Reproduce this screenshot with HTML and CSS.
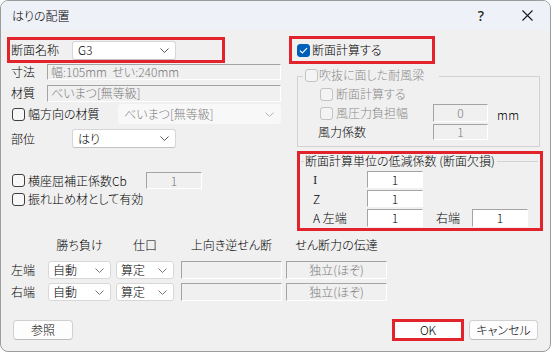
FILE: index.html
```html
<!DOCTYPE html>
<html lang="ja">
<head>
<meta charset="utf-8">
<title>はりの配置</title>
<link rel="stylesheet" href="styles.css">
</head>
<body>
<div class="window">
  <div class="titlebar">
    <span class="title">はりの配置</span>
    <span class="tbtn help">?</span>
    <span class="tbtn close"><svg width="11" height="11" viewBox="0 0 11 11"><path d="M0.5 0.5L10.5 10.5M10.5 0.5L0.5 10.5" stroke="#1a1a1a" stroke-width="1.1" fill="none"/></svg></span>
  </div>

  <div class="main">
    <div class="left">
      <div class="red rb-name">
        <span class="lbl lbl-name">断面名称</span>
        <div class="combo combo-short">G3<svg class="chev" width="9" height="5" viewBox="0 0 9 5"><path d="M0.5 0.5L4.5 4.5L8.5 0.5" fill="none" stroke="#555"/></svg></div>
      </div>
      <div class="row row-size">
        <span class="lbl lbl-short">寸法</span>
        <div class="fld dis fld-long">幅:105mm&nbsp;&nbsp;せい:240mm</div>
      </div>
      <div class="row row-mat">
        <span class="lbl lbl-short">材質</span>
        <div class="fld dis fld-long">べいまつ[無等級]</div>
      </div>
      <div class="row row-wmat">
        <span class="cb cb-left"></span>
        <span class="cblbl lbl-wmat">幅方向の材質</span>
        <div class="combo dis combo-wmat">べいまつ[無等級]<svg class="chev" width="9" height="5" viewBox="0 0 9 5"><path d="M0.5 0.5L4.5 4.5L8.5 0.5" fill="none" stroke="#b5b5b5"/></svg></div>
      </div>
      <div class="row row-part">
        <span class="lbl lbl-part">部位</span>
        <div class="combo combo-short">はり<svg class="chev" width="9" height="5" viewBox="0 0 9 5"><path d="M0.5 0.5L4.5 4.5L8.5 0.5" fill="none" stroke="#555"/></svg></div>
      </div>
      <div class="row row-cb">
        <span class="cb cb-left"></span>
        <span class="cblbl lbl-cbcoef">横座屈補正係数Cb</span>
        <div class="fld dis fld-cb">1</div>
      </div>
      <div class="row row-brace">
        <span class="cb cb-left"></span>
        <span class="cblbl">振れ止め材として有効</span>
      </div>
    </div>

    <div class="right">
      <div class="red rb-calc">
        <span class="cb on"><svg width="9" height="7" viewBox="0 0 9 7"><path d="M1 3.6L3.4 6L8 1.2" fill="none" stroke="#fff" stroke-width="1.2"/></svg></span>
        <span class="cblbl">断面計算する</span>
      </div>

      <div class="group wind">
        <div class="legend">
          <span class="cb dis"></span>
          <span class="cblbl gray">吹抜に面した耐風梁</span>
        </div>
        <div class="grow grow-calc">
          <span class="cb dis"></span>
          <span class="cblbl gray">断面計算する</span>
        </div>
        <div class="grow grow-width">
          <span class="cb dis"></span>
          <span class="cblbl gray lbl-wind">風圧力負担幅</span>
          <div class="fld dis fld-wind">0</div>
          <span class="unit">mm</span>
        </div>
        <div class="grow grow-coef">
          <span class="lbl lbl-coef">風力係数</span>
          <div class="fld dis fld-wind">1</div>
        </div>
      </div>

      <div class="red rb-reduce">
        <div class="gtitle">
          <span class="gline gline-start"></span>
          <span class="gtext">断面計算単位の低減係数 (断面欠損)</span>
          <span class="gline gline-end"></span>
        </div>
        <div class="rrow rrow-i">
          <span class="lbl lbl-red"><span class="serif-i">I</span></span>
          <div class="fld white fld-red">1</div>
        </div>
        <div class="rrow rrow-z">
          <span class="lbl lbl-red">Z</span>
          <div class="fld white fld-red">1</div>
        </div>
        <div class="rrow rrow-a">
          <span class="lbl lbl-red">A&nbsp;左端</span>
          <div class="fld white fld-red fld-a">1</div>
          <span class="lbl lbl-rend">右端</span>
          <div class="fld white fld-red fld-a">1</div>
        </div>
      </div>
    </div>
  </div>

  <div class="ends">
    <div class="erow ehead">
      <span class="ec ec0"></span>
      <span class="ec ec1">勝ち負け</span>
      <span class="ec ec2">仕口</span>
      <span class="ec ec3">上向き逆せん断</span>
      <span class="ec ec4">せん断力の伝達</span>
    </div>
    <div class="erow erow-1">
      <span class="ec ec0 lbl">左端</span>
      <div class="combo ec ec1">自動<svg class="chev" width="9" height="5" viewBox="0 0 9 5"><path d="M0.5 0.5L4.5 4.5L8.5 0.5" fill="none" stroke="#777"/></svg></div>
      <div class="combo ec ec2">算定<svg class="chev" width="9" height="5" viewBox="0 0 9 5"><path d="M0.5 0.5L4.5 4.5L8.5 0.5" fill="none" stroke="#777"/></svg></div>
      <div class="fld dis ec ec3"></div>
      <div class="fld dis ec ec4 center">独立(ほぞ)</div>
    </div>
    <div class="erow erow-2">
      <span class="ec ec0 lbl">右端</span>
      <div class="combo ec ec1">自動<svg class="chev" width="9" height="5" viewBox="0 0 9 5"><path d="M0.5 0.5L4.5 4.5L8.5 0.5" fill="none" stroke="#777"/></svg></div>
      <div class="combo ec ec2">算定<svg class="chev" width="9" height="5" viewBox="0 0 9 5"><path d="M0.5 0.5L4.5 4.5L8.5 0.5" fill="none" stroke="#777"/></svg></div>
      <div class="fld dis ec ec3"></div>
      <div class="fld dis ec ec4 center">独立(ほぞ)</div>
    </div>
  </div>

  <div class="buttons">
    <div class="btn btn-ref">参照</div>
    <div class="red ok-wrap"><div class="btn btn-ok">OK</div></div>
    <div class="btn btn-cancel">キャンセル</div>
  </div>
</div>
</body>
</html>
```

FILE: styles.css
```css
* { box-sizing: border-box; }
html, body { margin: 0; padding: 0; background: #ffffff; }
body {
  font-family: "Noto Sans CJK JP", "Noto Sans", sans-serif;
  font-size: 12px;
  font-weight: 300;
  line-height: 14px;
  color: #000;
  font-feature-settings: "palt";
}

.window {
  width: 551px;
  height: 352px;
  border: 1px solid #9c9c9c;
  border-radius: 8px;
  background: #f0f0f0;
  overflow: hidden;
  display: flex;
  flex-direction: column;
}

.titlebar {
  height: 29px;
  flex: none;
  background: #eff1f8;
  display: flex;
  align-items: center;
  padding-left: 11px;
}
.title { flex: 1; font-size: 12px; }
.tbtn {
  width: 46px;
  height: 29px;
  display: flex;
  align-items: center;
  justify-content: center;
}
.help { font-size: 14px; font-weight: 500; color: #1a1a1a; font-family: "Noto Sans", sans-serif; }

.main { display: flex; align-items: flex-start; padding-left: 6px; }
.left { width: 282px; flex: none; display: flex; flex-direction: column; }
.right { display: flex; flex-direction: column; }

.red { border: 3px solid #e3232b; }

.row { display: flex; align-items: center; flex: none; }
.lbl { display: inline-block; flex: none; white-space: nowrap; }
.cblbl { white-space: nowrap; flex: none; }
.gray { color: #8a8a8a; }
.serif-i { font-family: "DejaVu Serif", "Liberation Serif", serif; font-size: 11px; font-weight: 400; color: #222; }

/* checkboxes */
.cb {
  width: 13px; height: 13px; flex: none;
  border: 1px solid #3f3f3f;
  border-radius: 3px;
  background: #f7f7f7;
  display: inline-flex; align-items: center; justify-content: center;
}
.cb.dis { border-color: #c3c3c3; background: #f4f4f4; }
.cb.on { background: #005fb8; border-color: #005fb8; }
.cb-left { margin-left: 5px; margin-right: 3px; }

/* fields */
.fld {
  display: flex; align-items: center;
  border: 1px solid;
  border-color: #a4a4a4 #ffffff #ffffff #a4a4a4;
  padding-left: 3px;
  white-space: nowrap;
  overflow: hidden;
}
.fld.dis { background: #f0f0f0; color: #7a7a7a; }
.fld.white { background: #ffffff; color: #000; justify-content: center; padding-left: 0; }
.center { justify-content: center; padding-left: 0; }

/* combos */
.combo {
  display: flex; align-items: center; justify-content: space-between;
  background: #ffffff;
  border: 1px solid #d6d6d6;
  border-bottom-color: #c2c2c2;
  border-radius: 3px;
  padding: 0 6px 0 5px;
  white-space: nowrap;
}
.combo.dis { background: #f8f8f8; border-color: #f8f8f8; color: #808080; }
.chev { flex: none; }

/* left column */
.rb-name {
  margin-top: 7px; width: 218px; height: 26px;
  display: flex; align-items: center;
}
.lbl-name { width: 62px; padding-left: 1px; }
.combo-short { width: 104px; height: 19px; }

.row-size { margin-top: 1px; height: 16px; }
.row-mat { margin-top: 5px; height: 16px; }
.lbl-short { width: 40px; padding-left: 4px; }
.fld-long { width: 234px; height: 16px; }
.row-mat .fld-long { height: 17px; }

.row-wmat { margin-top: 3px; height: 20px; }
.lbl-wmat { width: 90px; }
.combo-wmat { width: 163px; height: 20px; }

.row-part { margin-top: 5px; height: 19px; }
.lbl-part { width: 65px; padding-left: 4px; }

.row-cb { margin-top: 24px; height: 17px; }
.lbl-cbcoef { width: 118px; }
.fld-cb { width: 56px; height: 17px; justify-content: center; padding-left: 0; }
.row-brace { margin-top: 3px; height: 14px; }

/* right column */
.rb-calc {
  margin-top: 6px; width: 146px; height: 28px;
  display: flex; align-items: center; padding-left: 5px;
}
.rb-calc .cblbl { margin-left: 2px; }

.group {
  margin-top: 12px; margin-left: 8px;
  width: 243px; height: 71px;
  border: 1px solid #d2d2d2;
  display: flex; flex-direction: column;
}
.legend {
  margin-top: -9px; margin-left: 5px;
  align-self: flex-start;
  height: 14px;
  padding: 0 15px 0 2px;
  background: #f0f0f0;
  display: flex; align-items: center;
}
.legend .cblbl { margin-left: 1px; }
.grow { display: flex; align-items: center; padding-left: 22px; }
.grow .cblbl { margin-left: 3px; }
.grow-calc { margin-top: 5px; height: 14px; }
.grow-width { margin-top: 3px; height: 18px; }
.lbl-wind { width: 97px; }
.fld-wind { width: 55px; height: 18px; justify-content: center; padding-left: 0; }
.unit { margin-left: 9px; margin-top: 4px; letter-spacing: 0.5px; }
.grow-coef { margin-top: 2px; height: 16px; padding-left: 20px; }
.grow-coef .fld-wind { height: 16px; }
.lbl-coef { width: 115px; }

.rb-reduce {
  margin-top: 4px; margin-left: 8px;
  width: 246px; height: 80px;
  display: flex; flex-direction: column;
}
.gtitle { display: flex; align-items: flex-start; height: 14px; padding-left: 1px; }
.gline { border-top: 1px solid #d2d2d2; margin-top: 7px; }
.gline-start { width: 3px; flex: none; }
.gtext { padding: 0 2px 0 1px; white-space: nowrap; margin-top: 0; }
.gline-end { flex: 1; margin-right: 2px; }

.rrow { display: flex; align-items: center; }
.rrow-i { margin-top: 3px; height: 17px; }
.rrow-z { margin-top: 2px; height: 17px; }
.rrow-a { margin-top: 2px; height: 18px; }
.lbl-red { width: 67px; padding-left: 13px; }
.fld-red { width: 56px; height: 17px; }
.fld-a { height: 18px; }
.lbl-rend { margin-left: 13px; width: 36px; }

/* ends table */
.ends { padding-left: 6px; display: flex; flex-direction: column; }
.erow { display: flex; align-items: center; }
.ehead { margin-top: 7px; height: 14px; }
.ehead .ec { text-align: center; white-space: nowrap; }
.erow-1 { margin-top: 9px; height: 18px; }
.erow-2 { margin-top: 4px; height: 18px; }
.ec { flex: none; height: 18px; }
.ehead .ec { height: 14px; }
.ec0 { width: 41px; padding-left: 4px; display: flex; align-items: center; }
.ec1 { width: 63px; }
.ec2 { width: 58px; margin-left: 5px; }
.ec3 { width: 101px; margin-left: 7px; }
.ec4 { width: 101px; margin-left: 4px; }
.erow .combo { padding-left: 4px; border-color: #d8d8d8; }

/* buttons */
.buttons {
  margin-top: 18px;
  height: 22px;
  display: flex; align-items: center;
  padding: 0 12px 0 12px;
}
.btn {
  display: flex; align-items: center; justify-content: center;
  background: #fdfdfd;
  border: 1px solid #d0d0d0;
  border-bottom-color: #bcbcbc;
  border-radius: 4px;
  height: 20px;
}
.btn-ref { width: 60px; }
.ok-wrap { margin-left: auto; width: 72px; height: 22px; display: flex; }
.btn-ok { width: 66px; height: 16px; border-radius: 0; border-color: #fdfdfd; flex: none; }
.btn-cancel { width: 69px; margin-left: 5px; }
```
